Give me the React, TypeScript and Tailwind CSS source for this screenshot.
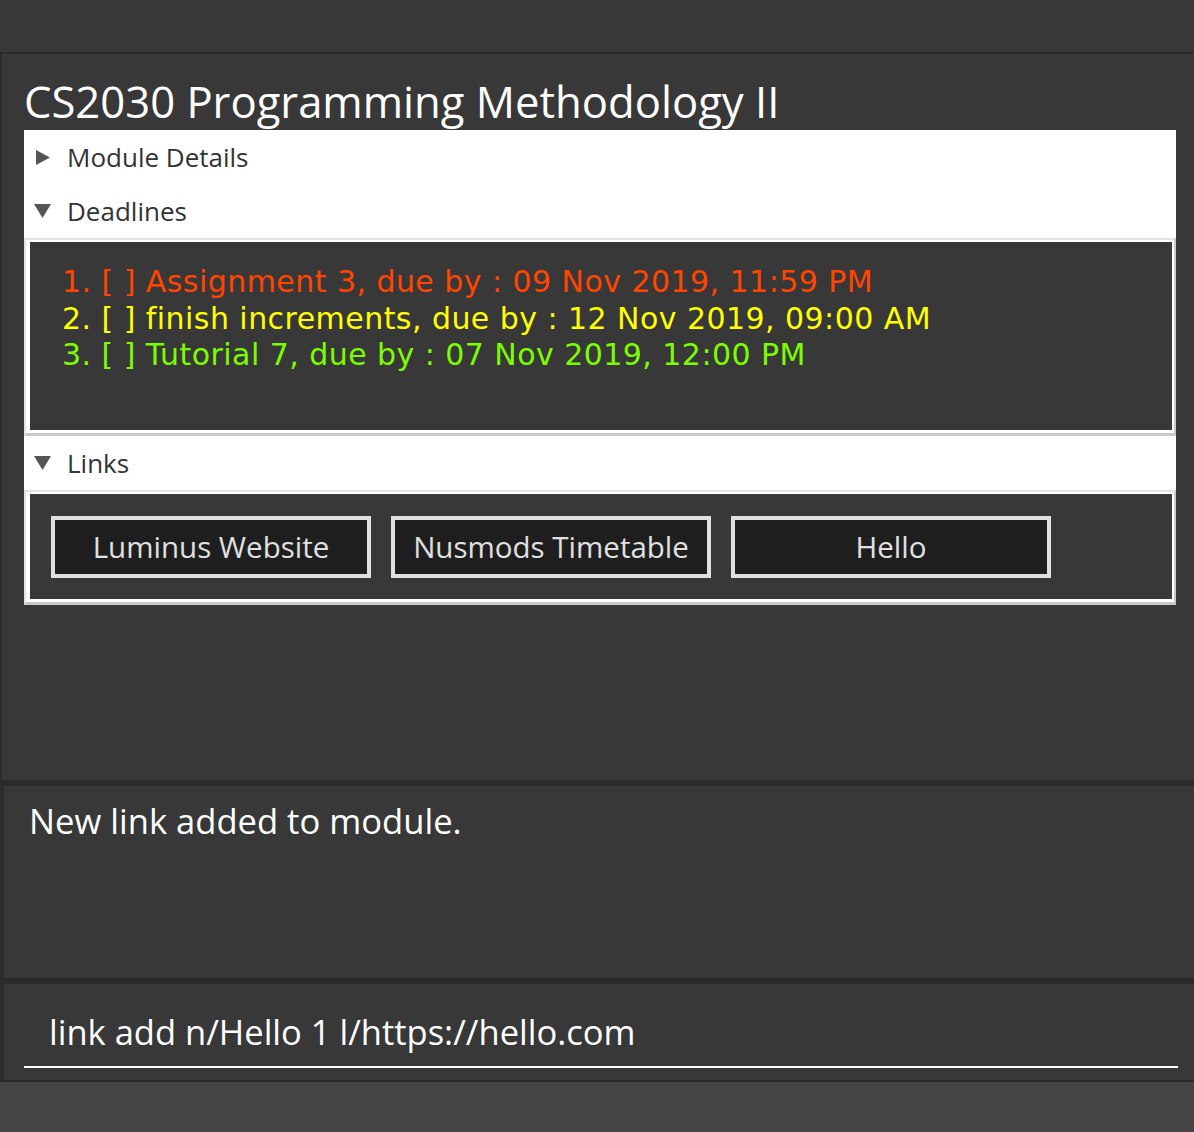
const UI = "font-['Open_Sans',sans-serif]";

const deadlines = [
  { text: "1. [ ] Assignment 3, due by : 09 Nov 2019, 11:59 PM", color: "text-[#ff4500]" },
  { text: "2. [ ] finish increments, due by : 12 Nov 2019, 09:00 AM", color: "text-[#ffff00]" },
  { text: "3. [ ] Tutorial 7, due by : 07 Nov 2019, 12:00 PM", color: "text-[#7cfc00]" },
];

const links = ["Luminus Website", "Nusmods Timetable", "Hello"];

function Arrow({ open }: { open: boolean }) {
  return open ? (
    <svg width="17" height="14" viewBox="0 0 17 14" className="ml-[10px] mr-[16px]">
      <polygon points="0,0 17,0 8.5,14" fill="#555" />
    </svg>
  ) : (
    <svg width="14" height="15" viewBox="0 0 14 15" className="ml-[12px] mr-[17px]">
      <polygon points="0,0 14,7.5 0,15" fill="#555" />
    </svg>
  );
}

function Header({ title, open }: { title: string; open: boolean }) {
  return (
    <div className="flex h-[54px] items-center bg-white">
      <Arrow open={open} />
      <span className="text-[26px] text-[#333]">{title}</span>
    </div>
  );
}

function Content({ children, className }: { children: React.ReactNode; className: string }) {
  return (
    <div className="border-2 border-b-[3px] border-t-[#e4e4e4] border-l-[#e4e4e4] border-r-[#c8c8c8] border-b-[#c8c8c8] bg-white pt-[2px] pl-[4px] pr-[2px] pb-[3px]">
      <div className={`bg-[#383838] ${className}`}>{children}</div>
    </div>
  );
}

export default function App() {
  return (
    <div className={`flex h-[1132px] w-[1194px] flex-col bg-[#383838] ${UI}`}>
      <div className="h-[54px] shrink-0 border-b-2 border-[#2b2b2b]" />

      <div className="flex h-[726px] shrink-0 flex-col border-l-2 border-[#2d2d2d] pl-[22px] pr-[18px] pt-[22px]">
        <div className="h-[54px] text-[43.6px] leading-[50px] text-white">
          CS2030 Programming Methodology II
        </div>

        <Header title="Module Details" open={false} />
        <Header title="Deadlines" open={true} />
        <Content className="h-[188px] pl-[32px] pt-[22px]">
          {deadlines.map((d) => (
            <div
              key={d.text}
              className={`font-['DejaVu_Sans',sans-serif] text-[30px] leading-[36.5px] tracking-[0.45px] ${d.color}`}
            >
              {d.text}
            </div>
          ))}
        </Content>

        <Header title="Links" open={true} />
        <Content className="flex h-[105px] gap-[20px] pl-[21px] pt-[22px]">
          {links.map((l) => (
            <div
              key={l}
              className="flex h-[62px] w-[320px] items-center justify-center border-4 border-[#e0e0e0] bg-[#1e1e1e] text-[29.5px] text-[#e0e0e0]"
            >
              {l}
            </div>
          ))}
        </Content>
      </div>

      <div className="h-[6px] shrink-0 bg-[#2b2b2b]" />

      <div className="h-[192px] shrink-0 border-l-4 border-[#2d2d2d] pl-[25px] pt-[9px] text-[34.6px] text-white">
        New link added to module.
      </div>

      <div className="h-[6px] shrink-0 bg-[#2b2b2b]" />

      <div className="flex h-[96px] shrink-0 flex-col border-l-4 border-[#2d2d2d] pl-[20px] pr-[16px]">
        <div className="pl-[25px] pt-[24px] text-[34.5px] leading-[48px] text-white">
          link add n/Hello 1 l/https://hello.com
        </div>
        <div className="mt-[10px] h-[2px] bg-white" />
      </div>

      <div className="h-[2px] shrink-0 bg-[#2b2b2b]" />
      <div className="flex-1 bg-[#444444]" />
    </div>
  );
}
